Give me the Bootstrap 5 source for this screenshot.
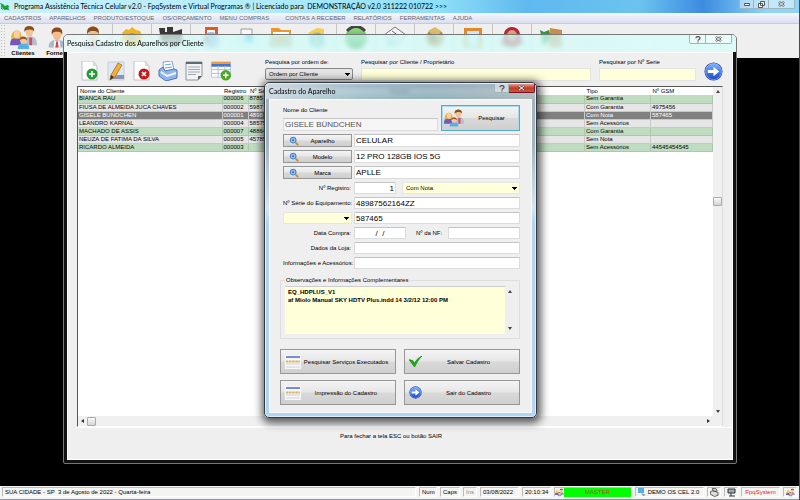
<!DOCTYPE html>
<html lang="pt-BR">
<head>
<meta charset="utf-8">
<meta name="viewport" content="width=device-width, initial-scale=1">
<title>Programa Assistência Técnica Celular v2.0</title>
<link rel="stylesheet" href="https://cdn.jsdelivr.net/npm/bootstrap@5.3.0/dist/css/bootstrap.min.css">
<style>
  body { font: 6px/8px "Liberation Sans", Arial, sans-serif; color: #000; background: #000; }
  button, input, select, textarea { font: inherit; color: inherit; border-radius: 0; }
  svg { display: block; flex: none; }
  .desk { border-right: 1px solid #1d5f55; }
  .caption-text { font-family: Lato, "Open Sans", sans-serif; font-size: 7px; line-height: 9px; }

  .app-title { height: 13px; background: linear-gradient(90deg, #c6f1fa 0, #b4ecfa 30%, #8fdff8 55%, #5fb9ef 66%, #6cc3ef 80%, #3c8be0 88%, #8fd6f6 96%); }
  .glass-btns button { height: 9px; border: 1px solid #9fb6bd; border-top: 0; border-left-width: 0; background: rgba(255,255,255,.45); padding: 0; display: flex; align-items: center; justify-content: center; }
  .glass-btns button:first-child { border-left-width: 1px; border-bottom-left-radius: 2px; }
  .glass-btns button:last-child { border-bottom-right-radius: 2px; }
  .w15 { width: 15px; } .w17 { width: 17px; } .w26 { width: 26px; }
  .app-menu { height: 11px; background: linear-gradient(#f7f8fc, #d9deef); border-bottom: 1px solid #c8ccd8; }
  .app-menu a { color: #62646c; text-decoration: none; padding-left: 4px; padding-right: 4px; }
  .app-tools { height: 34px; background: #efefef; }
  .grip { width: 6px; background: radial-gradient(circle, #bbb 1px, transparent 1px) 0 0 / 3px 3px; }
  .tool { width: 34px; border: 0; background: none; padding: 2px 0 0; font-weight: 700; overflow: hidden; white-space: nowrap; display: flex; flex-direction: column; align-items: center; }
  .tool-wide { width: 39px; }
  .tool-sep { border-right: 1px solid #c4c4c4; }

  .win { left: 63px; right: 62px; top: 34px; bottom: 36px; border: 1px solid #777; border-radius: 5px 5px 2px 2px; background: linear-gradient(transparent 17px, #111 17px); padding: 0 3px 3px; }
  .win-head { height: 17px; margin: 0 -3px; padding-left: 3px; border-radius: 4px 4px 0 0; background: linear-gradient(90deg, rgba(236,248,250,.75), rgba(205,252,248,.72) 25%, rgba(214,252,248,.78)); backdrop-filter: blur(2px); }
  .win-body { background: #efefef; border: 1px solid #fff; }
  .strip button { border: 0; background: none; padding: 0; }
  .strip { padding: 5px 9px 5px 12px; }
  .iconset { gap: 6px; width: 185px; padding-top: 3px; }
  .lab { display: block; margin-bottom: 2px; }
  .yel { background: #ffffd9; border: 1px solid #e6e6e0; height: 13px; padding: 0 3px; }
  .drop { appearance: none; background-image: conic-gradient(from -45deg at 50% 100%, #000 90deg, transparent 0); background-repeat: no-repeat; background-size: 5px 3px; background-position: right 2px center; padding: 0 10px 0 3px; }
  .drop-grey { height: 12px; border: 1px solid #888; border-radius: 2px; background-color: #e4e4e4; }
  .w-order { width: 88px; } .w-serie { width: 97px; }

  .listing { margin: 0 9px; border: 1px solid #555; border-right-color: #ddd; border-bottom-color: #fff; background: #fff; }
  .rows { table-layout: fixed; border-collapse: collapse; width: 100%; }
  .rows th, .rows td { padding: 0 2px 0 1px; height: 8px; line-height: 7px; overflow: hidden; white-space: nowrap; }
  .rows th { font-weight: 400; padding-left: 2px; }
  .rows td { border: 1px solid #c9c9c9; border-width: 0 1px 1px 0; background: #e6e6e6; }
  .rows .odd td { background: #c0dcc0; border-color: #adc8ad; }
  .rows .sel td { background: #808080; color: #fff; }
  .c1 { width: 144px; } .c2 { width: 26px; } .c3 { width: 140px; } .c4 { width: 90px; } .c6 { width: 66px; } .c7 { width: 62px; }
  .vbar { width: 10px; background: #f0f0f0; padding: 3px 0; }
  .hbar { height: 10px; background: #f0f0f0; padding: 0 12px 0 3px; }
  .thumb { width: 9px; height: 9px; border: 1px solid #aaa; border-radius: 1px; background: linear-gradient(#fafafa, #d4d4d4); }
  .vlead { height: 96px; }
  .hlead { width: 3px; }
  .foot { height: 32px; padding: 4px 26px 0 0; border-top: 1px solid #fff; }

  .dlg { left: 264px; top: 82px; width: 273px; border: 1px solid #333a44; border-radius: 5px; padding: 0 4px 4px; box-shadow: inset 0 0 0 1px #dcecf8, 1px 2px 9px 3px rgba(0,0,0,.65); background: linear-gradient(transparent 16px, #a3b3bd 16px, #a3b3bd 60px, #d3e4f2 125px, #b2d4f3 140px, #b2d4f3); }
  .dlg-head { height: 15px; background: linear-gradient(90deg, rgba(205,218,226,.88), rgba(150,182,198,.75) 35%, rgba(130,165,182,.75) 60%, rgba(169,180,187,.85)); backdrop-filter: blur(2px); margin: 1px -3px 0; padding-left: 3px; border-radius: 4px 4px 0 0; }
  .glass-btns .red { background: linear-gradient(#e0a094, #c23b28 50%, #d0553c); border-color: #712; }
  .dlg-body { background: #efefef; border: 1px solid #f9fafc; padding: 5px 11px 7px 10px; }
  .btn7 { border: 1px solid #979797; background: linear-gradient(#f4f4f4, #e6e6e6 49%, #d9d9d9 51%, #cfcfcf); padding: 0; display: flex; align-items: center; }
  .btn7 span { flex: 1; text-align: center; }
  .btn-find { width: 79px; height: 26px; border-color: #58a9cf; box-shadow: inset 0 0 0 1px #a9dcf0; padding-left: 2px; }
  .btn-key { width: 69px; height: 13px; padding: 0 5px; }
  .btn-big { height: 25px; padding: 0 4px; }
  .fld { border: 1px solid #dcdcdc; border-top-color: #c4c4c4; background: #fff; font-size: 8px; padding: 0 1px; min-width: 0; height: 13px; line-height: 10px; }
  .fld-grey { color: #555; background: #f6f6f6; }
  .stack { gap: 3px; }
  .row-f { gap: 2px; padding-left: 3px; }
  .row-top { gap: 3px; margin-bottom: 3px; padding-left: 3px; }
  .stack-low .fld, .stack-low .yel { height: 12px; }
  .key { width: 69px; text-align: right; flex: none; white-space: nowrap; padding-right: 1px; }
  .w-num { width: 42px; } .w-date { width: 52px; flex: none; }
  .obs { border: 1px solid #dedede; margin-top: 7px; padding: 0 4px 4px; }
  .obs legend { font-size: 6px; line-height: 8px; margin: 0 0 2px; padding: 0 1px; width: auto; float: none; }
  .obs-text { flex: 1; height: 48px; border: 0; border-top: 1px solid #ccc; background: #ffffd9; font-weight: 700; padding: 1px 3px; resize: none; overflow: hidden; }
  .obs-bar { width: 10px; padding: 4px 0; }
  .acts { --bs-gutter-y: 6px; margin-top: 4px; }

  .status { height: 14px; background: #f4f4f2; padding: 1px 2px 2px; gap: 3px; border-bottom: 1px solid #8a9aa8; }
  .cell { border: 1px solid #bbb; border-right-color: #fff; border-bottom-color: #fff; padding: 0 2px; display: flex; align-items: center; white-space: nowrap; }
  .s18 { width: 18px; } .s20 { width: 20px; } .s14 { width: 14px; } .s38 { width: 39px; } .s28 { width: 29px; } .s78 { width: 78px; } .s70 { width: 69px; }
  .master { background: #00ff00; color: #a8501c; height: 9px; }
  .brand-red { color: #e8202c; }
</style>
<script src="https://cdn.jsdelivr.net/npm/bootstrap@5.3.0/dist/js/bootstrap.bundle.min.js"></script>
</head>
<body>
<svg width="0" height="0" class="position-absolute" aria-hidden="true">
  <defs>
    <linearGradient id="gb" x2="0" y2="1"><stop offset="0" stop-color="#7db4ff"/><stop offset="1" stop-color="#1648c8"/></linearGradient>
    <linearGradient id="gs" x2="0" y2="1"><stop offset="0" stop-color="#9de08c"/><stop offset="1" stop-color="#0e8a18"/></linearGradient>
  </defs>
  <symbol id="person" viewBox="0 0 24 24"><path d="M2 24c0-7 4-9 10-9s10 2 10 9z" fill="#aab8cc"/><path d="M9 15l3 3 3-3 1 9H8z" fill="#fff"/><path d="M11 17h2l1 7h-4z" fill="#d8404a"/><ellipse cx="12" cy="9" rx="5" ry="6.500" fill="#f3bd8c"/><path d="M6 9C4 2 9 0 12 0s8 2 6 9c-1-4-3-4-6-4S7 5 6 9z" fill="#8a4a1c"/></symbol>
  <symbol id="people" viewBox="0 0 28 24"><path d="M15 18c0-6 3-7 6-7s7 1 7 8v1H15z" fill="#b2bfd2"/><path d="M20 12h3v8h-3z" fill="#d84a58"/><ellipse cx="20" cy="6" rx="4" ry="5" fill="#f4c294"/><path d="M15 6c-1-5 3-6 5-6s6 1 5 6c-1-3-8-3-10 0z" fill="#8a5020"/><path d="M0 20c0-7 3-8 6-8s6 1 6 8z" fill="#7459b8"/><path d="M1 13c0-11 12-11 11 0z" fill="#eeb52e"/><ellipse cx="7" cy="9" rx="3" ry="4" fill="#f8cfa2"/><path d="M8 24c0-5 3-6 6-6s6 1 6 6z" fill="#55b0e4"/><circle cx="14" cy="15" r="3.500" fill="#f6c79c"/><path d="M10 15c-1-5 8-6 8 0-2-2-6-2-8 0z" fill="#9a5a22"/></symbol>
  <symbol id="go" viewBox="0 0 20 20"><circle cx="10" cy="10" r="9.500" fill="#1d3c9c"/><circle cx="10" cy="10" r="8.500" fill="url(#gb)" stroke="#bcd3ff" stroke-width=".6"/><path d="M4 8.500h6V5l6 5-6 5v-3.500H4z" fill="#fff"/></symbol>
  <symbol id="lens" viewBox="0 0 12 12"><path d="M1 0h7v10H1z" fill="#dcebfa"/><circle cx="5" cy="5" r="3.500" fill="#9cc9f4" stroke="#2a62b8"/><path d="M4 5h2M5 4v2" stroke="#1540a0"/><path d="M8 8l3 3" stroke="#c98634" stroke-width="2"/></symbol>
  <symbol id="tick" viewBox="0 0 14 12"><path d="M0 4l4 1 2 3c2-4 4-6 8-8-4 4-6 8-8 12z" fill="#15b515" stroke="#087808" stroke-width=".7"/></symbol>
  <symbol id="sheet" viewBox="0 0 20 20"><path d="M2 0h11l4 5v14H2z" fill="#fff" stroke="#b9c0c8"/><path d="M13 0v5h4z" fill="#d5dae0"/></symbol>
  <symbol id="mini" viewBox="0 0 16 14"><path d="M0 0h16v14H0z" fill="#f8f8f8"/><path d="M1 2h14" stroke="#4f74d4" stroke-width="1.600"/><path d="M1 6.500h14" stroke="#d9b55c" stroke-width="2" stroke-dasharray="2.500 .6"/><path d="M1 9h14M1 12h14" stroke="#cdd0d6"/></symbol>
  <symbol id="print" viewBox="0 0 20 20"><path d="M5 1l9-1 2 9-10 2z" fill="#fff" stroke="#7fa0d8"/><path d="M1 9l4-3 2 4 9-2 3 1v8l-11 3-7-5z" fill="#8fb6ec" stroke="#4c72b8"/><path d="M3 11l6 4 9-3" fill="none" stroke="#eaf3ff" stroke-width="2"/><path d="M7 4l6-1M7 7l7-1" stroke="#6d9be0"/></symbol>
  <symbol id="q" viewBox="0 0 6 7"><path d="M1 2.300C1 0 5 0 5 2.200 5 3.600 3 3.400 3 4.800M3 5.600v1" fill="none" stroke="#555" stroke-width="1.300"/></symbol>
  <symbol id="x" viewBox="0 0 7 6"><path d="M1 .8l5 4.400M6 .8L1 5.200" stroke="#555" stroke-width="2.200"/><path d="M1 .8l5 4.400M6 .8L1 5.200" stroke="#fff"/></symbol>
  <symbol id="up" viewBox="0 0 4 3"><path d="M0 3l2-3 2 3z" fill="#444"/></symbol>
  <symbol id="dn" viewBox="0 0 4 3"><path d="M0 0l2 3 2-3z" fill="#444"/></symbol>
</svg>

<div class="desk d-flex flex-column min-vh-100 position-relative">
  <header class="app-title caption-text d-flex align-items-center">
    <svg width="10" height="11" viewBox="0 0 22 22"><path d="M0 3l7 3 4 4 6-3 4 5-3 1 3 7-6-3-5 2-5-5-4-2 2-2z" fill="#1fa43c"/><path d="M2 14l4 3M12 14l4 4" stroke="#0b5820" stroke-width="2"/></svg>
    <span class="ms-1 me-auto">Programa Assistência Técnica Celular v2.0 - FpqSystem e Virtual Programas ® | Licenciado para &nbsp;DEMONSTRAÇÃO v2.0 311222 010722 &gt;&gt;&gt;</span>
    <div class="glass-btns d-flex align-self-start me-1">
      <button class="w15" aria-label="Minimizar"><svg width="6" height="3"><path d="M.5.5h5v2h-5z" fill="#fff" stroke="#555"/></svg></button>
      <button class="w15" aria-label="Restaurar"><svg width="7" height="7"><path d="M2.500.5h4v4h-4zM.5 2.500h4v4h-4z" fill="#fff" stroke="#555"/></svg></button>
      <button class="w26" aria-label="Fechar"><svg width="7" height="6"><use href="#x"/></svg></button>
    </div>
  </header>
  <nav class="app-menu d-flex align-items-center">
    <a href="#">CADASTROS</a><a href="#">APARELHOS</a><a href="#">PRODUTO/ESTOQUE</a><a href="#">OS/ORÇAMENTO</a><a href="#">MENU COMPRAS</a><a href="#" class="ms-2">CONTAS A RECEBER</a><a href="#">RELATÓRIOS</a><a href="#">FERRAMENTAS</a><a href="#">AJUDA</a>
  </nav>
  <div class="app-tools d-flex">
    <span class="grip"></span>
    <button class="tool"><svg width="27" height="23"><use href="#people"/></svg>Clientes</button>
    <button class="tool"><svg width="20" height="23"><use href="#person"/></svg>Fornec.</button>
    <button class="tool tool-wide tool-sep" aria-label="Funcionários"><svg width="22" height="23"><use href="#person"/></svg></button>
    <button class="tool tool-wide tool-sep" aria-label="Produtos"><svg width="22" height="22" viewBox="0 0 22 22"><path d="M1 7l4-4 3 1 3-3 4 3 4 1 2 4-2 9-9 4-8-5z" fill="#efb51f"/><circle cx="11" cy="11" r="4" fill="#9b9b5c"/></svg></button>
    <button class="tool tool-wide tool-sep" aria-label="Aparelhos"><svg width="26" height="22" viewBox="0 0 26 22"><path d="M1 2h6v4h2V1h6v5l9-3v14l-9 4-12-6z" fill="#383838"/><path d="M9 15h11" stroke="#b77" stroke-width="4"/></svg></button>
    <button class="tool tool-wide" aria-label="Agenda"><svg width="22" height="22" viewBox="0 0 22 22"><path d="M5 1h13v8H5z" fill="#e2572b"/><path d="M7 4h8v4H7z" fill="#fff"/><circle cx="11" cy="14" r="8" fill="#9cb4d8"/><path d="M3 14l5-3v6z" fill="#c33"/></svg></button>
    <button class="tool" aria-label="Impressão"><svg width="20" height="22" viewBox="0 0 20 22"><path d="M4 3h11v8H4z" fill="#f6f6f6" stroke="#999"/><path d="M1 10h17v9H1z" fill="#d6edf0"/><path d="M8 9h8v7H8z" fill="#58b8dc"/></svg></button>
    <button class="tool" aria-label="Caixa"><svg width="22" height="22" viewBox="0 0 22 22"><path d="M1 2h8l2 2h10v10H1z" fill="#ea9a2c"/><path d="M3 6h16v4H3z" fill="#fff"/><path d="M0 10h6l2 3h6l2-3h6v11H0z" fill="#c8b088"/></svg></button>
    <button class="tool tool-wide tool-sep" aria-label="Pesquisa"><svg width="22" height="22" viewBox="0 0 22 22"><path d="M2 7L11 2l7 1v7H4z" fill="#f6cf4c"/><circle cx="11" cy="14" r="7.500" fill="#67b5e8"/><path d="M9 8l3 12" stroke="#e8d060" stroke-width="3"/></svg></button>
    <button class="tool tool-wide tool-sep" aria-label="Receber"><svg width="24" height="24" viewBox="0 0 24 24"><circle cx="12" cy="12" r="11" fill="url(#gs)"/><path d="M3 5c6-6 12-6 18 0" fill="none" stroke="#444" stroke-width="3"/></svg></button>
    <button class="tool tool-wide tool-sep" aria-label="Pagar"><svg width="24" height="22" viewBox="0 0 24 22"><path d="M1 9L12 1l11 8-9 9z" fill="#f4f4f4" stroke="#777"/><path d="M9 5l7 5M7 8l6 4" stroke="#667"/><path d="M4 14h10v6H4z" fill="#9cd8dc"/></svg></button>
    <button class="tool tool-wide tool-sep" aria-label="Financeiro"><svg width="22" height="22" viewBox="0 0 22 22"><circle cx="12" cy="12" r="9" fill="#b58a3c"/><path d="M5 5l7-4 6 4-4 7z" fill="#dcb868"/><circle cx="10" cy="13" r="4" fill="#75501c"/></svg></button>
    <button class="tool tool-wide tool-sep" aria-label="Relatórios"><svg width="20" height="22" viewBox="0 0 20 22"><path d="M1 2h18v20H1z" fill="#dd8b2c"/><path d="M4 5h12v16H4z" fill="#cfe8f4"/></svg></button>
    <button class="tool tool-wide tool-sep" aria-label="Suporte"><svg width="24" height="22" viewBox="0 0 24 22"><path d="M4 10C3-2 21-2 20 10l3 7-10 5-12-4z" fill="#b9203c"/><circle cx="12" cy="9" r="5" fill="#d8a06c"/></svg></button>
    <button class="tool tool-wide" aria-label="Sair"><svg width="26" height="22" viewBox="0 0 26 22"><path d="M11 2l12 2v17H10z" fill="#c98c4c"/><path d="M1 4l4 2 5-2 2 8-8 8z" fill="#2f9844"/></svg></button>
  </div>
  <main class="flex-grow-1"></main>
  <footer class="status d-flex">
    <span class="cell flex-grow-1">SUA CIDADE - SP &nbsp;3 de Agosto de 2022 - Quarta-feira</span>
    <span class="cell s18">Num</span><span class="cell s20">Caps</span><span class="cell s14 text-black-50">Ins</span>
    <span class="cell s38">03/08/2022</span><span class="cell s28">20:10:34</span>
    <span class="cell s78 p-0"><svg width="9" height="9"><use href="#people"/></svg><span class="master flex-grow-1 text-center">MASTER</span></span>
    <span class="cell s70"><svg width="8" height="8" viewBox="0 0 8 8"><path d="M0 0h6v5H0z" fill="#58aede"/><path d="M3 5l5 2-3 1z" fill="#6a9aa8"/></svg><span class="flex-grow-1 text-center">DEMO OS CEL 2.0</span></span>
    <span class="cell s14"><svg width="9" height="9" viewBox="0 0 20 20"><path d="M5 1h8l3 6H7zM1 8l5-2 12 4v6l-8 3-9-5z" fill="#ddd" stroke="#555" stroke-width="2"/></svg></span>
    <span class="cell s14"><svg width="9" height="9" viewBox="0 0 9 9"><path d="M1 1h7v4H1zM4 5v3M2 8h6" fill="#9ab" stroke="#333"/></svg></span>
    <span class="cell s38 justify-content-center brand-red">FpqSystem</span>
    <span class="cell s14"><svg width="9" height="9"><use href="#people"/></svg></span>
  </footer>

  <section class="win position-absolute d-flex flex-column">
    <div class="win-head caption-text d-flex align-items-center">
      <span class="me-auto">Pesquisa Cadastro dos Aparelhos por Cliente</span>
      <div class="glass-btns d-flex align-self-start me-1">
        <button class="w17" aria-label="Ajuda"><svg width="6" height="7"><use href="#q"/></svg></button>
        <button class="w26" aria-label="Fechar"><svg width="7" height="6"><use href="#x"/></svg></button>
      </div>
    </div>
    <div class="win-body flex-grow-1 d-flex flex-column">
      <div class="strip d-flex align-items-start">
        <div class="iconset d-flex">
          <button aria-label="Novo"><svg width="20" height="20"><use href="#sheet"/><circle cx="12" cy="13" r="5.500" fill="#279a34"/><path d="M12 10v6M9 13h6" stroke="#fff" stroke-width="1.600"/></svg></button>
          <button aria-label="Editar"><svg width="20" height="20" viewBox="0 0 20 20"><path d="M2 1h16v18H2z" fill="#dfe6f6" stroke="#c6ccd8"/><path d="M11 14h7v4H4z" fill="#8d96ac"/><path d="M12 2l4 2-7 12-5 3 1-5z" fill="#f0b034" stroke="#9a6620" stroke-width=".7"/><path d="M5 14l3 2-4 3z" fill="#333"/></svg></button>
          <button aria-label="Excluir"><svg width="20" height="20"><use href="#sheet"/><circle cx="12" cy="13" r="5.500" fill="#c01c20"/><path d="M10 11l4 4M14 11l-4 4" stroke="#fff" stroke-width="1.600"/></svg></button>
          <button aria-label="Imprimir"><svg width="20" height="20"><use href="#print"/></svg></button>
          <button aria-label="Ficha"><svg width="20" height="20" viewBox="0 0 20 20"><path d="M2 1h16v14l-4 4H2z" fill="#f2f3f5" stroke="#8d949c"/><path d="M2 2h16" stroke="#606a76" stroke-width="2"/><path d="M4 6h12M4 8.500h12M4 11h12M4 13.500h8" stroke="#a2a8b0"/><path d="M18 15h-4v4z" fill="#666"/></svg></button>
          <button aria-label="Nova tabela"><svg width="23" height="20" viewBox="0 0 23 21"><path d="M1 1h20v16H1z" fill="#fff" stroke="#b8c4e0"/><path d="M1 2h20" stroke="#f09a30" stroke-width="2"/><path d="M1 4.500h20" stroke="#4472d0" stroke-width="3"/><path d="M1 9h20M1 13h20M8 5v12M15 5v12" stroke="#aebcdc"/><circle cx="16" cy="15" r="5.500" fill="#4da524"/><path d="M16 12v6M13 15h6" stroke="#fff" stroke-width="1.600"/></svg></button>
        </div>
        <div class="w-order me-2"><label class="lab" for="ordem">Pesquisa por ordem de:</label><select id="ordem" class="drop drop-grey w-100 d-block"><option>Ordem por Cliente</option></select></div>
        <div class="flex-grow-1 me-2"><label class="lab" for="busca">Pesquisar por Cliente / Proprietário</label><input id="busca" class="yel w-100 d-block"></div>
        <div class="w-serie me-2"><label class="lab" for="serie">Pesquisar por Nº Serie</label><input id="serie" class="yel w-100 d-block"></div>
        <button class="mt-1" aria-label="Pesquisar"><svg width="19" height="19"><use href="#go"/></svg></button>
      </div>
      <div class="listing flex-grow-1 d-flex flex-column">
        <div class="flex-grow-1 d-flex">
          <div class="flex-grow-1">
            <table class="rows">
              <colgroup><col class="c1"><col class="c2"><col class="c3"><col class="c4"><col><col class="c6"><col class="c7"></colgroup>
              <thead><tr><th>Nome do Cliente</th><th>Registro</th><th>Nº Série</th><th>Modelo</th><th></th><th>Tipo</th><th>Nº GSM</th></tr></thead>
              <tbody>
                <tr class="odd"><td>BIANCA RAU</td><td>000006</td><td>8785</td><td></td><td></td><td>Sem Garantia</td><td></td></tr>
                <tr><td>FIUSA DE ALMEIDA JUCA CHAVES</td><td>000002</td><td>5987</td><td></td><td></td><td>Com Garantia</td><td>4975456</td></tr>
                <tr class="sel"><td>GISELE BUNDCHEN</td><td>000001</td><td>4898</td><td></td><td></td><td>Com Nota</td><td>587465</td></tr>
                <tr><td>LEANDRO KARNAL</td><td>000004</td><td>58575</td><td></td><td></td><td>Sem Acessórios</td><td></td></tr>
                <tr class="odd"><td>MACHADO DE ASSIS</td><td>000007</td><td>48864</td><td></td><td></td><td>Com Garantia</td><td></td></tr>
                <tr><td>NEUZA DE FATIMA DA SILVA</td><td>000005</td><td>45785</td><td></td><td></td><td>Sem Nota</td><td></td></tr>
                <tr class="odd"><td>RICARDO ALMEIDA</td><td>000003</td><td></td><td></td><td></td><td>Sem Acessórios</td><td>44545454545</td></tr>
              </tbody>
            </table>
          </div>
          <div class="vbar d-flex flex-column align-items-center"><svg width="4" height="3"><use href="#up"/></svg><span class="vlead"></span><span class="thumb mt-2 mb-auto"></span><svg width="4" height="3"><use href="#dn"/></svg></div>
        </div>
        <div class="hbar d-flex align-items-center"><svg width="3" height="4"><path d="M3 0v4L0 2z" fill="#333"/></svg><span class="hlead"></span><span class="thumb me-auto"></span><svg width="3" height="4"><path d="M0 0v4l3-2z" fill="#333"/></svg></div>
      </div>
      <div class="foot text-center ms-2">Para fechar a tela ESC ou botão SAIR</div>
    </div>
  </section>

  <section class="dlg position-absolute">
    <div class="dlg-head caption-text d-flex align-items-center">
      <span class="me-auto">Cadastro do Aparelho</span>
      <div class="glass-btns d-flex align-self-start">
        <button class="w15" aria-label="Ajuda"><svg width="6" height="7"><use href="#q"/></svg></button>
        <button class="red w26" aria-label="Fechar"><svg width="7" height="6"><use href="#x"/></svg></button>
      </div>
    </div>
    <form class="dlg-body">
      <div class="d-flex align-items-end row-top">
        <div class="flex-grow-1"><label class="d-block mb-1" for="nome">Nome do Cliente</label><input id="nome" class="fld fld-grey w-100 d-block" value="GISELE BÜNDCHEN"></div>
        <button type="button" class="btn7 btn-find"><svg width="20" height="18"><use href="#people"/></svg><span>Pesquisar</span></button>
      </div>
      <div class="d-flex flex-column stack">
        <div class="d-flex row-f"><button type="button" class="btn7 btn-key"><svg width="10" height="10"><use href="#lens"/></svg><span>Aparelho</span></button><input aria-label="Aparelho" class="fld flex-grow-1" value="CELULAR"></div>
        <div class="d-flex row-f"><button type="button" class="btn7 btn-key"><svg width="10" height="10"><use href="#lens"/></svg><span>Modelo</span></button><input aria-label="Modelo" class="fld flex-grow-1" value="12 PRO 128GB IOS 5G"></div>
        <div class="d-flex row-f"><button type="button" class="btn7 btn-key"><svg width="10" height="10"><use href="#lens"/></svg><span>Marca</span></button><input aria-label="Marca" class="fld flex-grow-1" value="APLLE"></div>
        <div class="d-flex flex-column stack stack-low">
          <div class="d-flex row-f align-items-center"><label class="key" for="reg">Nº Registro:</label><input id="reg" class="fld w-num text-end" value="1"><select aria-label="Nota" class="yel drop flex-grow-1 ms-1"><option>Com Nota</option></select></div>
          <div class="d-flex row-f align-items-center"><label class="key" for="ns">Nº Série do Equipamento:</label><input id="ns" class="fld flex-grow-1" value="48987562164ZZ"></div>
          <div class="d-flex row-f align-items-center"><select aria-label="Tipo de número" class="yel drop key"><option></option></select><input aria-label="Número" class="fld flex-grow-1" value="587465"></div>
          <div class="d-flex row-f align-items-center"><label class="key" for="data">Data Compra:</label><input id="data" class="fld w-date text-center" value="/  /"><label class="ms-2 me-1 text-nowrap" for="nf">Nº da NF:</label><input id="nf" class="fld flex-grow-1"></div>
          <div class="d-flex row-f align-items-center"><label class="key" for="loja">Dados da Loja:</label><input id="loja" class="fld flex-grow-1"></div>
          <div class="d-flex row-f align-items-center"><label class="key" for="info">Informações e Acessórios:</label><input id="info" class="fld flex-grow-1"></div>
        </div>
      </div>
      <fieldset class="obs">
        <legend>Observações e Informações Complementares</legend>
        <div class="d-flex">
          <textarea class="obs-text" aria-label="Observações">EQ_HDPLUS_V1
af Miolo Manual SKY HDTV Plus.indd 14 3/2/12 12:00 PM</textarea>
          <div class="obs-bar d-flex flex-column justify-content-between align-items-center"><svg width="4" height="3"><use href="#up"/></svg><svg width="4" height="3"><use href="#dn"/></svg></div>
        </div>
      </fieldset>
      <div class="row row-cols-2 gx-2 acts">
        <div class="col"><button type="button" class="btn7 btn-big w-100"><svg width="16" height="14"><use href="#mini"/></svg><span>Pesquisar Serviços Executados</span></button></div>
        <div class="col"><button type="button" class="btn7 btn-big w-100"><svg width="13" height="11"><use href="#tick"/></svg><span>Salvar Cadastro</span></button></div>
        <div class="col"><button type="button" class="btn7 btn-big w-100"><svg width="16" height="14"><use href="#mini"/></svg><span>Impressão do Cadastro</span></button></div>
        <div class="col"><button type="button" class="btn7 btn-big w-100"><svg width="13" height="13"><use href="#go"/></svg><span>Sair do Cadastro</span></button></div>
      </div>
    </form>
  </section>
</div>
</body>
</html>
